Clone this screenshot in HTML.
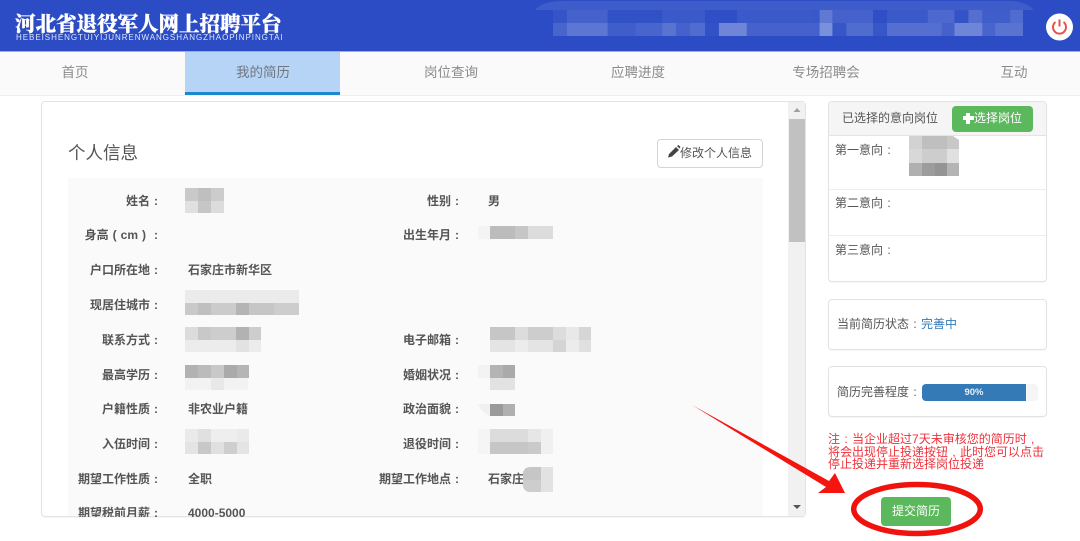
<!DOCTYPE html>
<html lang="zh"><head><meta charset="utf-8">
<style>
html,body{margin:0;padding:0;background:#fff}
#p{position:relative;width:1080px;height:541px;overflow:hidden;background:#fff;font:12px/16px "Liberation Sans","Noto Sans CJK SC",sans-serif;color:#555}
#p div{position:absolute;white-space:nowrap}
i{font-style:normal;display:inline-block;width:12px;text-align:center}
.n{top:64px;width:120px;text-align:center;font-size:13.5px;line-height:18px;color:#8c8c8c}
.l{width:130px;text-align:right;font-weight:bold;color:#555;line-height:16px}
.v{font-weight:bold;color:#555;line-height:16px}
.box{border:1px solid #e3e3e3;border-radius:4px;box-sizing:border-box;background:#fff;box-shadow:0 1px 1px rgba(0,0,0,.04)}
svg{position:absolute;left:0;top:0}
</style></head><body><div id="p">
<div style="left:0;top:0;width:1080px;height:51px;background:#2b4cc5"></div>
<div style="left:0;top:51px;width:1080px;height:1px;background:#8fb2ee"></div>
<svg width="1080" height="51" viewBox="0 0 1080 51">
<path d="M535 10Q542 1 562 1H1010Q1025 1 1034 10Z" fill="#fff" opacity=".09"/>
<g fill="#fff" transform="translate(553 0) scale(1.0706 1) translate(-551 0)">
<rect x="551" y="10" width="13" height="13" opacity=".05"/><rect x="564" y="10" width="38" height="13" opacity=".12"/><rect x="602" y="10" width="51" height="13" opacity=".03"/><rect x="653" y="10" width="40" height="13" opacity=".08"/><rect x="693" y="10" width="30" height="13" opacity=".02"/><rect x="723" y="10" width="70" height="13" opacity=".08"/><rect x="793" y="10" width="7" height="13" opacity=".07"/><rect x="800" y="10" width="12" height="13" opacity=".25"/><rect x="812" y="10" width="38" height="13" opacity=".12"/><rect x="850" y="10" width="13" height="13" opacity=".02"/><rect x="863" y="10" width="38" height="13" opacity=".08"/><rect x="901" y="10" width="25" height="13" opacity=".16"/><rect x="926" y="10" width="13" height="13" opacity=".04"/><rect x="939" y="10" width="13" height="13" opacity=".2"/><rect x="952" y="10" width="26" height="13" opacity=".1"/><rect x="978" y="10" width="12" height="13" opacity=".18"/>
<rect x="551" y="23" width="13" height="13" opacity=".14"/><rect x="564" y="23" width="38" height="13" opacity=".24"/><rect x="602" y="23" width="26" height="13" opacity=".1"/><rect x="628" y="23" width="25" height="13" opacity=".14"/><rect x="653" y="23" width="13" height="13" opacity=".22"/><rect x="666" y="23" width="13" height="13" opacity=".12"/><rect x="679" y="23" width="14" height="13" opacity=".18"/><rect x="693" y="23" width="13" height="13" opacity=".03"/><rect x="706" y="23" width="26" height="13" opacity=".32"/><rect x="732" y="23" width="68" height="13" opacity=".12"/><rect x="800" y="23" width="12" height="13" opacity=".38"/><rect x="812" y="23" width="13" height="13" opacity=".06"/><rect x="825" y="23" width="25" height="13" opacity=".18"/><rect x="850" y="23" width="13" height="13" opacity=".06"/><rect x="863" y="23" width="51" height="13" opacity=".2"/><rect x="914" y="23" width="12" height="13" opacity=".12"/><rect x="926" y="23" width="26" height="13" opacity=".32"/><rect x="952" y="23" width="12" height="13" opacity=".14"/><rect x="964" y="23" width="26" height="13" opacity=".22"/>
</g>
<circle cx="1059.500" cy="27" r="13.500" fill="#fff"/>
<path d="M1055.500 22A6.500 6.500 0 1 0 1063.500 22" fill="none" stroke="#e8524c" stroke-width="2"/>
<path d="M1059.500 19.500V26.500" stroke="#e8524c" stroke-width="2"/>
</svg>
<div style="left:15px;top:8px;font:900 20.5px/28px 'Noto Serif CJK SC','Liberation Serif',serif;color:#fff;-webkit-text-stroke:.3px #fff">河北省退役军人网上招聘平台</div>
<div style="left:16px;top:33px;font:8px/9px 'Liberation Sans',sans-serif;letter-spacing:.96px;color:#dfe6fa">HEBEISHENGTUIYIJUNRENWANGSHANGZHAOPINPINGTAI</div>

<div style="left:0;top:52px;width:1080px;height:43px;background:#fafafa;border-bottom:1px solid #eee"></div>
<div style="left:185px;top:52px;width:155px;height:40px;background:#b6d4f5"></div>
<div style="left:185px;top:92px;width:155px;height:3px;background:#1e88cf"></div>
<div class="n" style="left:15px">首页</div>
<div class="n" style="left:203px;color:#6f7780">我的简历</div>
<div class="n" style="left:391px">岗位查询</div>
<div class="n" style="left:578px">应聘进度</div>
<div class="n" style="left:766px">专场招聘会</div>
<div class="n" style="left:954px">互动</div>

<div class="box" style="left:41px;top:101px;width:765px;height:416px"></div>
<div style="left:68px;top:178px;width:695px;height:338px;background:#fafafa"></div>
<div style="left:788px;top:102px;width:17px;height:414px;background:#f1f1f1"></div>
<div style="left:789px;top:119px;width:16px;height:123px;background:#c1c1c1"></div>
<div style="left:68px;top:141px;font-size:17.500px;line-height:24px;color:#555">个人信息</div>
<div style="left:657px;top:139px;width:106px;height:29px;box-sizing:border-box;border:1px solid #d4d4d4;border-radius:4px;background:#fff"></div>
<div style="left:680px;top:145px;color:#555">修改个人信息</div>

<svg width="1080" height="541" viewBox="0 0 1080 541">
<path d="M668 157.500L669 154L676 147L679 150L672 156.500Z M677 146L678.500 145L680.500 147L679.500 148.500Z" fill="#444"/>
<path d="M793.500 112L797 108L800.500 112Z" fill="#a0a0a0"/><path d="M793 505H801L797 509Z" fill="#555"/>
<g>
<path fill="#c9c9c9" d="M185 188h13v13h-13z"/><path fill="#bfbfbf" d="M198 188h13v13h-13z"/><path fill="#cccccc" d="M211 188h13v13h-13z"/><path fill="#e0e0e0" d="M185 201h13v12h-13z"/><path fill="#c6c6c6" d="M198 201h13v12h-13z"/><path fill="#dcdcdc" d="M211 201h13v12h-13z"/>
<path fill="#f4f4f4" d="M478 226h12v13h-12z"/><path fill="#bcbcbc" d="M490 226h25v13h-25z"/><path fill="#c6c6c6" d="M515 226h13v13h-13z"/><path fill="#dcdcdc" d="M528 226h25v13h-25z"/>
<path fill="#ebebeb" d="M185 290h114v13h-114z"/>
<path fill="#c9c9c9" d="M185 303h13v12h-13z"/><path fill="#bfbfbf" d="M198 303h13v12h-13z"/><path fill="#cbcbcb" d="M211 303h38v12h-38z"/><path fill="#b4b4b4" d="M236 303h13v12h-13z"/><path fill="#c6c6c6" d="M249 303h25v12h-25z"/><path fill="#cdcdcd" d="M274 303h25v12h-25z"/>
<path fill="#dcdcdc" d="M185 327h13v13h-13z"/><path fill="#c8c8c8" d="M198 327h13v13h-13z"/><path fill="#cdcdcd" d="M211 327h25v13h-25z"/><path fill="#b2b2b2" d="M236 327h13v13h-13z"/><path fill="#cdcdcd" d="M249 327h12v13h-12z"/>
<path fill="#ececec" d="M185 340h51v12h-51z"/><path fill="#e2e2e2" d="M236 340h13v12h-13z"/><path fill="#ececec" d="M249 340h12v12h-12z"/>
<path fill="#b2b2b2" d="M185 365h13v13h-13z"/><path fill="#bbbbbb" d="M198 365h13v13h-13z"/><path fill="#c8c8c8" d="M211 365h13v13h-13z"/><path fill="#aaaaaa" d="M224 365h13v13h-13z"/><path fill="#b5b5b5" d="M237 365h12v13h-12z"/>
<path fill="#f2f2f2" d="M185 378h63v12h-63z"/><path fill="#e8e8e8" d="M211 378h13v12h-13z"/>
<path fill="#eaeaea" d="M185 429h13v13h-13z"/><path fill="#e0e0e0" d="M198 429h13v13h-13z"/><path fill="#eeeeee" d="M211 429h26v13h-26z"/><path fill="#eaeaea" d="M237 429h12v13h-12z"/>
<path fill="#e4e4e4" d="M185 442h13v12h-13z"/><path fill="#c8c8c8" d="M198 442h13v12h-13z"/><path fill="#e0e0e0" d="M211 442h13v12h-13z"/><path fill="#cecece" d="M224 442h13v12h-13z"/><path fill="#e4e4e4" d="M237 442h12v12h-12z"/>
<path fill="#c6c6c6" d="M490 327h25v13h-25z"/><path fill="#dcdcdc" d="M515 327h13v13h-13z"/><path fill="#cdcdcd" d="M528 327h25v13h-25z"/><path fill="#dcdcdc" d="M553 327h13v13h-13z"/><path fill="#e8e8e8" d="M566 327h13v13h-13z"/><path fill="#d6d6d6" d="M579 327h12v13h-12z"/>
<path fill="#e4e4e4" d="M490 340h25v12h-25z"/><path fill="#ececec" d="M515 340h13v12h-13z"/><path fill="#e4e4e4" d="M528 340h25v12h-25z"/><path fill="#d4d4d4" d="M553 340h13v12h-13z"/><path fill="#ececec" d="M566 340h13v12h-13z"/><path fill="#e0e0e0" d="M579 340h12v12h-12z"/>
<path fill="#f3f3f3" d="M478 365h12v13h-12z"/><path fill="#b4b4b4" d="M490 365h13v13h-13z"/><path fill="#aaaaaa" d="M503 365h12v13h-12z"/><path fill="#e2e2e2" d="M490 378h25v12h-25z"/>
<path fill="#f1f1f1" d="M478 404h12l0 12q-8-3-12-12z"/><path fill="#9a9a9a" d="M490 404h13v12h-13z"/><path fill="#b0b0b0" d="M503 404h12v12h-12z"/>
<path fill="#f5f5f5" d="M478 429h12v25h-12z"/><path fill="#dcdcdc" d="M490 429h38v13h-38z"/><path fill="#e6e6e6" d="M528 429h13v13h-13z"/><path fill="#f0f0f0" d="M541 429h12v25h-12z"/><path fill="#c6c6c6" d="M490 442h38v12h-38z"/><path fill="#cacaca" d="M528 442h13v12h-13z"/>
<path fill="#c6c6c6" d="M523 472q2-5 7-5h11v13h-18z"/><path fill="#e2e2e2" d="M541 467h12v25h-12z"/><path fill="#cdcdcd" d="M523 480h18v12h-11q-5 0-7-5z"/>
</g>
</svg>

<div class="l" style="left:32px;top:193px">姓名<i>:</i></div><div class="v" style="left:333px;top:193px;width:130px;text-align:right">性别<i>:</i></div><div class="v" style="left:488px;top:193px">男</div>
<div class="l" style="left:32px;top:227px">身高<i>(</i>cm<i>)</i><i>:</i></div><div class="v" style="left:333px;top:227px;width:130px;text-align:right">出生年月<i>:</i></div>
<div class="l" style="left:32px;top:262px">户口所在地<i>:</i></div><div class="v" style="left:188px;top:262px">石家庄市新华区</div>
<div class="l" style="left:32px;top:297px">现居住城市<i>:</i></div>
<div class="l" style="left:32px;top:332px">联系方式<i>:</i></div><div class="v" style="left:333px;top:332px;width:130px;text-align:right">电子邮箱<i>:</i></div>
<div class="l" style="left:32px;top:367px">最高学历<i>:</i></div><div class="v" style="left:333px;top:367px;width:130px;text-align:right">婚姻状况<i>:</i></div>
<div class="l" style="left:32px;top:401px">户籍性质<i>:</i></div><div class="v" style="left:188px;top:401px">非农业户籍</div><div class="v" style="left:333px;top:401px;width:130px;text-align:right">政治面貌<i>:</i></div>
<div class="l" style="left:32px;top:436px">入伍时间<i>:</i></div><div class="v" style="left:333px;top:436px;width:130px;text-align:right">退役时间<i>:</i></div>
<div class="l" style="left:32px;top:471px">期望工作性质<i>:</i></div><div class="v" style="left:188px;top:471px">全职</div><div class="v" style="left:333px;top:471px;width:130px;text-align:right">期望工作地点<i>:</i></div><div class="v" style="left:488px;top:471px;width:35px;overflow:hidden">石家庄</div>
<div style="left:42px;top:500px;width:740px;height:16.500px;overflow:hidden">
<div class="l" style="left:-10px;top:5px">期望税前月薪<i>:</i></div><div class="v" style="left:146px;top:5px">4000-5000</div></div>

<div class="box" style="left:828px;top:101px;width:219px;height:181px"></div>
<div style="left:829px;top:102px;width:217px;height:33px;background:#f5f5f5;border-bottom:1px solid #e4e4e4;border-radius:3px 3px 0 0"></div>
<div style="left:842px;top:110px;color:#555">已选择的意向岗位</div>
<div style="left:952px;top:106px;width:81px;height:26px;background:#5cb85c;border-radius:4px"></div>
<div style="left:962.500px;top:116px;width:11px;height:4px;background:#fff"></div>
<div style="left:966px;top:112.500px;width:4px;height:11px;background:#fff"></div>
<div style="left:974px;top:110px;color:#fff;line-height:16px">选择岗位</div>
<div style="left:829px;top:189px;width:217px;height:1px;background:#eee"></div>
<div style="left:829px;top:235px;width:217px;height:1px;background:#eee"></div>
<div style="left:835px;top:142px">第一意向<i>:</i></div>
<div style="left:835px;top:195px">第二意向<i>:</i></div>
<div style="left:835px;top:242px">第三意向<i>:</i></div>
<svg width="1080" height="541" viewBox="0 0 1080 541">
<path fill="#d2d2d2" d="M909 136h13v13h-13z"/><path fill="#bfbfbf" d="M922 136h25v13h-25z"/><path fill="#c8c8c8" d="M947 136h6l6 4v9h-12z"/>
<path fill="#d8d8d8" d="M909 149h13v14h-13z"/><path fill="#cdcdcd" d="M922 149h25v14h-25z"/><path fill="#e0e0e0" d="M947 149h12v14h-12z"/>
<path fill="#b0b0b0" d="M909 163h13v13h-13z"/><path fill="#9c9c9c" d="M922 163h13v13h-13z"/><path fill="#949494" d="M935 163h12v13h-12z"/><path fill="#b4b4b4" d="M947 163h12v13h-12z"/>
</svg>

<div class="box" style="left:828px;top:299px;width:219px;height:51px"></div>
<div style="left:837px;top:316px">当前简历状态<i>:</i><span style="color:#337ab7">完善中</span></div>
<div class="box" style="left:828px;top:366px;width:219px;height:51px"></div>
<div style="left:837px;top:384px">简历完善程度<i>:</i></div>
<div style="left:922px;top:384px;width:116px;height:17px;background:#f5f5f5;border-radius:4px"></div>
<div style="left:922px;top:384px;width:104px;height:17px;background:#337ab7;border-radius:4px 0 0 4px;color:#e8f0f8;font-size:9.500px;font-weight:bold;line-height:17px;text-align:center">90%</div>
<div style="left:828px;top:433px;color:#f0303a;line-height:12.600px">注<i>:</i>当企业超过7天未审核您的简历时<i>,</i><br>将会出现停止投递按钮<i>,</i>此时您可以点击<br>停止投递并重新选择岗位投递</div>
<div style="left:881px;top:497px;width:70px;height:29px;background:#5cb85c;border-radius:4px;color:#fff;line-height:29px;text-align:center">提交简历</div>
<svg width="1080" height="541" viewBox="0 0 1080 541">
<polygon points="692,405 829,481 835,473 845,493 818,493 826,487" fill="#f5140e"/>
<ellipse cx="917" cy="509" rx="63.300" ry="24.500" fill="none" stroke="#f0120c" stroke-width="5.500"/>
</svg>
</div></body></html>
